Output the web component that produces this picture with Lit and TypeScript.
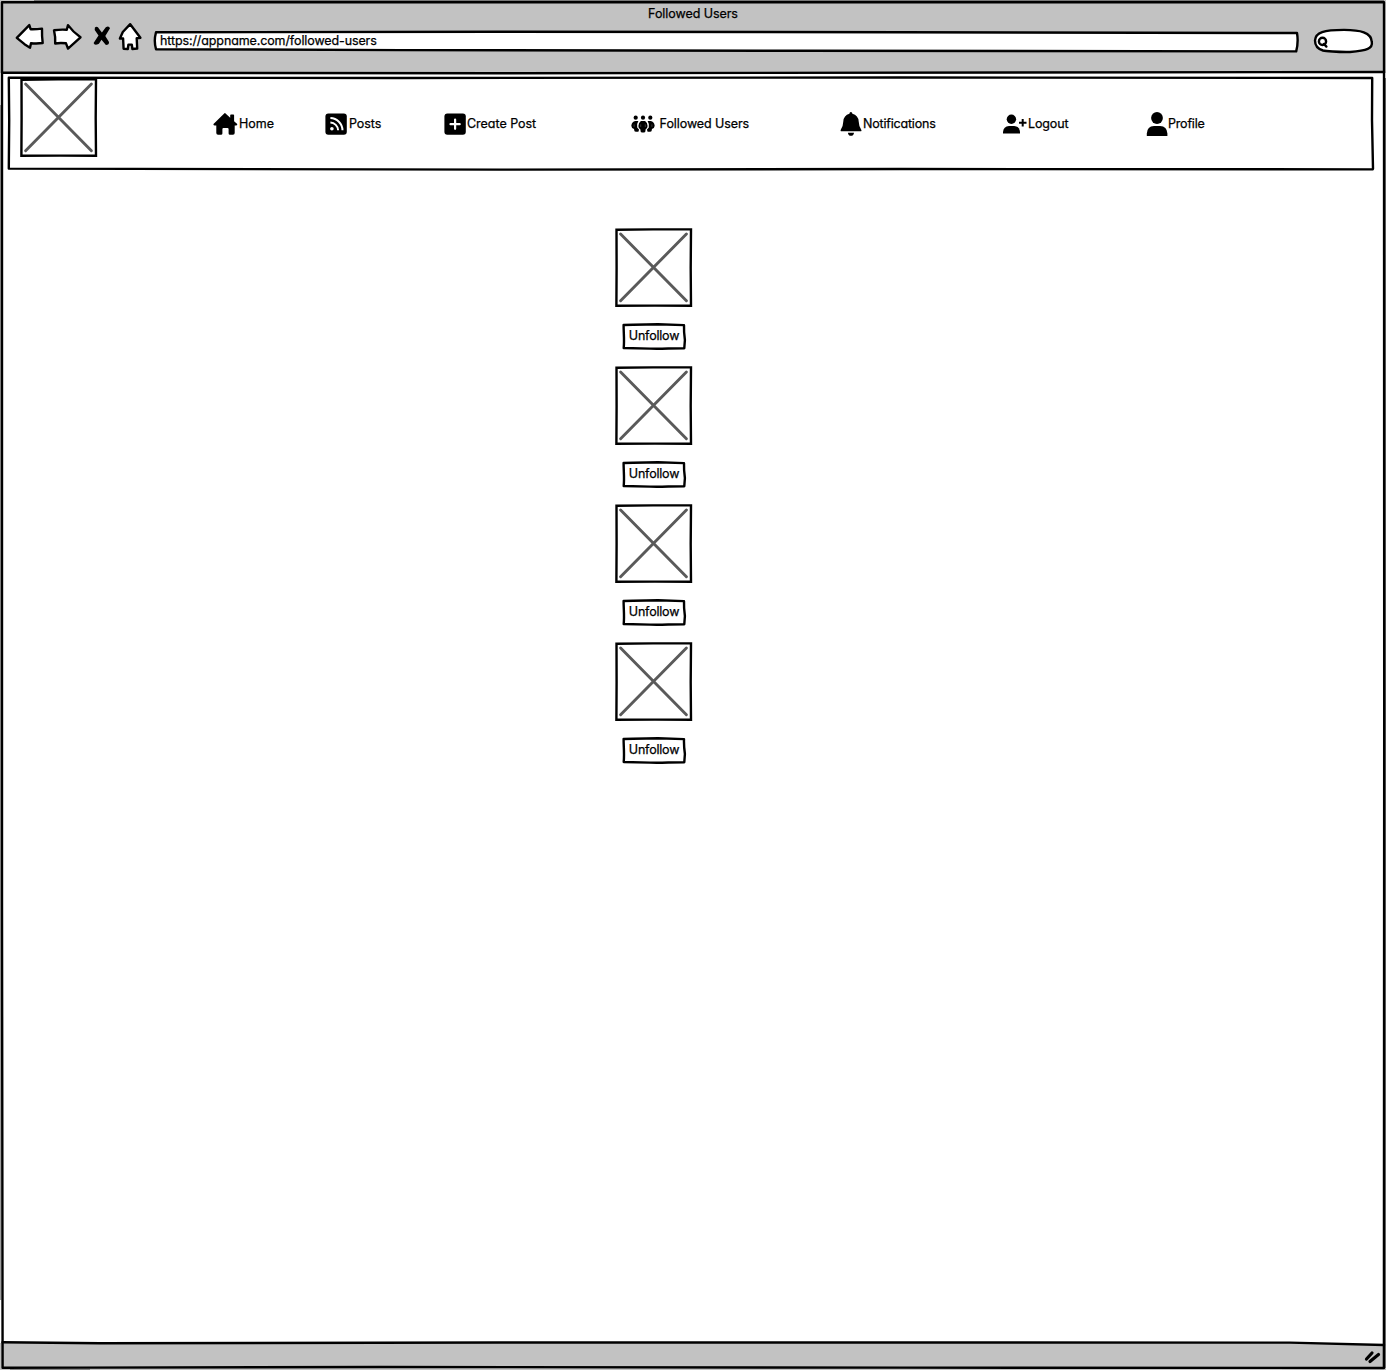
import { LitElement, html, svg, css, type SVGTemplateResult } from "lit";
import { customElement, property } from "lit/decorators.js";

const ink = css`
  :host { display: block; font-family: Inter, "Liberation Sans", sans-serif; font-feature-settings: "cv11"; color: #000; -webkit-text-stroke: 0.25px #000; }
  svg { display: block; overflow: visible; flex: none; }
  .line { fill: none; stroke: #000; stroke-width: 2.4; stroke-linejoin: round; stroke-linecap: round; }
  .white { fill: #fff; }
`;

@customElement("image-placeholder")
class ImagePlaceholder extends LitElement {
  static styles = [ink, css`
    .box { fill: #fff; stroke: #000; stroke-width: 2.4; }
    .cross { stroke: #5a5a5a; stroke-width: 2.9; stroke-linecap: round; }
  `];
  render() {
    return html`<svg width="77" height="79" viewBox="0 0 77 79">
      <path class="box" d="M1.5 1.7 L38 1.4 L76 1.4 L75.7 40 L76 77.7 L40 77.6 L1.4 77.8 L1.6 40 Z"/>
      <path class="cross" d="M5.6 6 L71.4 72.8 M71.4 6 L5.6 72.8"/>
    </svg>`;
  }
}

@customElement("sketch-button")
class SketchButton extends LitElement {
  @property() label = "";
  static styles = [ink, css`
    .button { position: relative; width: 64px; height: 27px; display: flex; align-items: center; justify-content: center; }
    .outline { position: absolute; inset: 0; }
    .label { position: relative; font-size: 12.5px; line-height: 16px; letter-spacing: -0.2px; margin: -1px 0 0 1px; white-space: nowrap; }
  `];
  render() {
    return html`<div class="button">
      <svg class="outline" width="64" height="27" viewBox="0 0 64 27">
        <path class="line white" d="M1.6 2 C14 1.2 26 1.6 36 1.3 L62 2.1 C61.8 8 62.2 12 62.9 17 L62.3 25.2 C46 25.3 40 26 28 25.6 L1.7 25 C2.5 17 1.6 10 1.6 2 Z"/>
      </svg>
      <span class="label">${this.label}</span>
    </div>`;
  }
}

interface NavEntry { label: string; width: number; spacing: number; icon: SVGTemplateResult; }

const entries: NavEntry[] = [
  { label: "Home", width: 26, spacing: 0, icon: svg`
    <path d="M12.3 1.2 L17.2 5.7 V3.2 Q17.2 2.4 18 2.4 H20.3 Q21.1 2.4 21.1 3.2 V9.2 L24.2 12 Q24.6 13.4 23.2 13.4 H21.7 V21 Q21.7 22.8 20 22.8 H17 Q15.6 22.8 15.6 21.4 V17.2 Q15.6 16.1 14.5 16.1 H10.4 Q9.4 16.1 9.4 17.2 V21.4 Q9.4 22.8 8 22.8 H5 Q3.3 22.8 3.3 21 V13.4 H1.5 Q0 13.2 .5 12 L11.2 1.4 Q11.8 .8 12.3 1.2 Z"/>` },
  { label: "Posts", width: 24, spacing: -0.05, icon: svg`
    <rect x=".4" y="1.4" width="21.4" height="21.4" rx="3"/>
    <circle cx="6.9" cy="16.8" r="1.8" fill="#fff"/>
    <path d="M5.4 10.5 A8 8 0 0 1 13.1 18.2 M5.4 6 A12.5 12.5 0 0 1 17.5 18.2" fill="none" stroke="#fff" stroke-width="2"/>` },
  { label: "Create Post", width: 23, spacing: -0.03, icon: svg`
    <rect x=".4" y="1.4" width="21.4" height="21.4" rx="3"/>
    <path d="M11.1 7.6 V16.8 M6.5 12.2 H15.7" stroke="#fff" stroke-width="2.2" stroke-linecap="round"/>` },
  { label: "Followed Users", width: 28.6, spacing: -0.08, icon: svg`
    <circle cx="4.7" cy="5.7" r="2.1"/><circle cx="12" cy="5.7" r="2.1"/><circle cx="19.3" cy="5.7" r="2.1"/>
    <path d="M4.3 9 H7.4 Q5.6 11.5 6.2 15.6 Q7 16.8 8 17.4 L7.6 19.6 Q5.5 20.2 3.5 19.2 L3 17 Q.4 16.1 .3 13.7 Q.9 9.5 4.3 9 Z"/>
    <path d="M19.7 9 H16.6 Q18.4 11.5 17.8 15.6 Q17 16.8 16 17.4 L16.4 19.6 Q18.5 20.2 20.5 19.2 L21 17 Q23.6 16.1 23.7 13.7 Q23.1 9.5 19.7 9 Z"/>
    <path d="M9.9 9 H14.1 Q16.7 10.8 16.6 14 Q16.5 16.2 14.7 17.3 L14.2 20 Q12 21.2 9.8 20 L9.3 17.3 Q7.3 16.3 7.4 14 Q7.5 10.6 9.9 9 Z"/>
    <path d="M9.7 12.4 V15 M14.3 12.4 V15 M3.1 12.4 V14.8 M20.9 12.4 V14.8" stroke="#777" stroke-width=".5"/>` },
  { label: "Notifications", width: 23, spacing: -0.19, icon: svg`
    <path d="M10.9 0 Q12.3 .1 12.4 1.8 Q18.2 3.2 18.7 9.5 Q18.9 14.2 21 17.2 Q22 18.7 21.2 19.3 H.9 Q.1 18.7 1 17.2 Q3.1 14.2 3.3 9.5 Q3.8 3.2 9.4 1.8 Q9.5 .1 10.9 0 Z M7.9 20.7 H14 Q13.8 23.8 10.9 23.8 Q8.2 23.8 7.9 20.7 Z"/>` },
  { label: "Logout", width: 25, spacing: -0.12, icon: svg`
    <circle cx="8.4" cy="7.2" r="4.7"/>
    <path d="M0 21.6 V20 Q.5 14.2 6 13.9 H11.2 Q16.5 14.2 17 20 V21.6 Z"/>
    <path d="M19.7 7.1 V14.5 M16 10.8 H23.5" stroke="#000" stroke-width="2"/>` },
  { label: "Profile", width: 22, spacing: -0.2, icon: svg`
    <circle cx="11" cy="6" r="5.9"/>
    <path d="M.8 23.9 V21.5 Q1.2 14.5 8 14.1 H14 Q21 14.5 21.4 21.5 V23.9 Z"/>` },
];

@customElement("site-nav")
class SiteNav extends LitElement {
  static styles = [ink, css`
    .nav { position: relative; width: 1366px; height: 94px; display: flex; align-items: flex-start; }
    .outline { position: absolute; inset: 0; }
    .logo { position: relative; margin: 2px 116px 0 12px; }
    .links { position: relative; display: grid; grid-template-columns: 112px 119px 187px 209px 163px 143px auto; margin-top: 36px; }
    .link { display: flex; align-items: center; height: 24px; }
    .text { font-size: 12.5px; line-height: 16px; white-space: nowrap; }
  `];
  render() {
    return html`<div class="nav">
      <svg class="outline" width="1366" height="94" viewBox="8 76 1366 94">
        <path class="line white" d="M8.8 77.7 L400 78 L900 77.5 L1372.2 78 L1372 120 L1373 168.8 L1372.6 169.4 L900 169 L500 169.6 L8.8 168.6 L9.2 120 Z"/>
      </svg>
      <image-placeholder class="logo"></image-placeholder>
      <div class="links">${entries.map(e => html`<div class="link">
        <svg width=${e.width} height="24" viewBox="0 0 ${e.width} 24">${e.icon}</svg>
        <span class="text" style="letter-spacing:${e.spacing}px">${e.label}</span></div>`)}</div>
    </div>`;
  }
}

@customElement("browser-bar")
class BrowserBar extends LitElement {
  static styles = [ink, css`
    .bar { height: 73px; background: #c2c2c2; }
    .title { height: 23px; padding-top: 6px; box-sizing: border-box; text-align: center; font-size: 12.5px; line-height: 16px; letter-spacing: -0.06px; }
    .tools { height: 28px; display: flex; padding-left: 16px; }
    .back { margin-right: 9px; }
    .forward { margin-right: 12px; }
    .stop { margin-right: 8px; }
    .home { margin-right: 12px; }
    .address { position: relative; width: 1146px; height: 23px; margin: 7px 14px 0 0; }
    .outline { position: absolute; inset: 0; }
    .url { position: relative; display: block; padding: 3px 0 0 7px; font-size: 12.5px; line-height: 16px; letter-spacing: -0.11px; }
    .search { margin-top: 5px; }
  `];
  render() {
    return html`<div class="bar">
      <div class="title">Followed Users</div>
      <div class="tools">
        <svg class="back" width="28" height="28" viewBox="16 23 28 28"><path class="line white" d="M16.8 37.8 L29.3 25.1 L30.6 29.2 Q36 29.4 42 28.6 Q41.8 36 42.7 43 Q37 43.8 31 43.2 L30 47.7 L24.5 44.2 Z"/></svg>
        <svg class="forward" width="28" height="28" viewBox="53 23 28 28"><path class="line white" d="M54 30.3 Q61 29.2 66.8 29.8 L68 25.1 Q73 32 80.5 37.3 L68 48.6 L66 43.3 Q60 42.5 55.2 43.5 Q55.6 37 54 30.3 Z"/></svg>
        <svg class="stop" width="17" height="28" viewBox="93 23 17 28"><path d="M94.9 27.4 Q97.4 25.6 99.2 28.9 L101.9 32.4 L105.8 27.2 Q108.9 25.4 110 28.2 L105.3 36 L109 42 Q109.3 44.8 105.9 45.1 L101.5 39.8 L98.9 43.7 Q94.4 46.2 93.6 43 L98.5 35.6 L94.7 30 Z"/></svg>
        <svg class="home" width="23" height="28" viewBox="118 23 23 28"><path class="line white" d="M130.2 24.2 L140.4 37.8 L136.7 38.3 L137.2 48.5 L132.4 49 L131.8 44.6 L128.4 44.6 L127.8 49 L123.6 48.7 L123.1 38.5 L119.9 38.5 L122.8 32 Z"/></svg>
        <div class="address">
          <svg class="outline" width="1146" height="23" viewBox="153 30 1146 23"><path class="line white" d="M156 32.2 L500 31.8 L900 32.2 L1297 33 Q1298.6 42 1296.2 51.4 L800 50.8 L400 50.1 L156 49.2 Q153.6 41 156 32.2 Z"/></svg>
          <span class="url">https://appname.com/followed-users</span>
        </div>
        <svg class="search" width="60" height="25" viewBox="1313 28 60 25">
          <path class="line white" d="M1315 40.5 C1315.5 32 1324 30 1344 29.9 C1360 30 1371.5 32.2 1371.8 42 C1373 48.5 1367 50.4 1350 52 C1338 52.3 1325 51 1323 50.5 C1318 49 1315 46.5 1315 40.5 Z"/>
          <circle class="line" cx="1322.5" cy="41.4" r="3.6"/><path class="line" d="M1324 44 L1326.4 46.6"/>
        </svg>
      </div>
    </div>`;
  }
}

@customElement("app-root")
class AppRoot extends LitElement {
  static styles = [ink, css`
    .window { position: relative; width: 1386px; height: 1370px; display: flex; flex-direction: column; background: #fff; overflow: hidden; }
    .nav { margin: 3px 0 0 8px; }
    .users { flex: 1; display: flex; flex-direction: column; align-items: center; gap: 16px; width: 77px; margin: 58px 0 0 615px; }
    .user { display: flex; flex-direction: column; align-items: center; gap: 16px; }
    .footer { height: 27px; background: #c2c2c2; }
    .frame { position: absolute; inset: 0; pointer-events: none; }
    .edge { fill: none; stroke: #777; stroke-width: 1; }
    .grip { fill: none; stroke: #000; stroke-width: 3.2; stroke-linecap: round; }
    .mask { fill: #fff; }
  `];
  render() {
    return html`<div class="window">
      <browser-bar></browser-bar>
      <site-nav class="nav"></site-nav>
      <div class="users">${[1, 2, 3, 4].map(() => html`<div class="user">
        <image-placeholder></image-placeholder>
        <sketch-button label="Unfollow"></sketch-button>
      </div>`)}</div>
      <div class="footer"></div>
      <svg class="frame" width="1386" height="1370" viewBox="0 0 1386 1370">
        <path class="mask" d="M1290 1342 L1384 1345.5 V1340 H1290 Z"/>
        <path class="edge" d="M34 .5 H1384 M.8 105 V1300 M1385.5 78 V1368 M10 1369.3 H90"/>
        <path class="line" d="M2 2.2 H1384 L1384.2 700 L1383.9 1368 L900 1367.6 L380 1367 L80 1367.6 L2.6 1367.7 L2 900 Z"/>
        <path class="line" d="M2.5 72.7 L500 73.2 L1384 72"/>
        <path class="line" d="M2.5 1342.2 L100 1343.2 L500 1342.5 L1290 1342.6 L1384 1345"/>
        <path class="grip" d="M1366.5 1359 L1372 1353 M1370 1361.5 L1378.5 1354.5"/>
      </svg>
    </div>`;
  }
}
